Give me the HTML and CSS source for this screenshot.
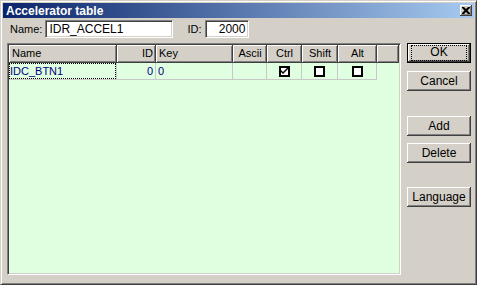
FILE: index.html
```html
<!DOCTYPE html>
<html lang="en">
    <head>
        <title>Accelerator table</title>
        <link rel="stylesheet" href="styles.css">
    </head>
    <body>
        <div class="window">
            <div class="titlebar">
                <span class="title">Accelerator table</span>
                <span class="close-btn">
                    <svg width="8" height="7" viewBox="0 0 8 7"><path d="M0 0h2l2 2 2-2h2v1l-2.5 2.5L8 6v1H6L4 5 2 7H0V6l2.5-2.5L0 1z" fill="#000"/></svg>
                </span>
            </div>

            <div class="form-row">
                <label class="lbl">Name:</label>
                <div class="field field-name">IDR_ACCEL1</div>
                <label class="lbl lbl-id">ID:</label>
                <div class="field field-id">2000</div>
            </div>

            <div class="main">
                <div class="listview">
                    <div class="lv-header">
                        <div class="hcell c-name">Name</div>
                        <div class="hcell c-id right">ID</div>
                        <div class="hcell c-key">Key</div>
                        <div class="hcell c-ascii center">Ascii</div>
                        <div class="hcell c-ctrl center">Ctrl</div>
                        <div class="hcell c-shift center">Shift</div>
                        <div class="hcell c-alt center">Alt</div>
                        <div class="hcell c-rest"></div>
                    </div>
                    <div class="lv-row">
                        <div class="cell c-name"><span class="focus">IDC_BTN1</span></div>
                        <div class="cell c-id right">0</div>
                        <div class="cell c-key">0</div>
                        <div class="cell c-ascii"></div>
                        <div class="cell c-ctrl center"><span class="check checked">
                            <svg width="7" height="7" viewBox="0 0 7 7"><path d="M0 2l2 2 5-5v2l-5 5-2-2z" fill="#000"/></svg>
                        </span></div>
                        <div class="cell c-shift center"><span class="check"></span></div>
                        <div class="cell c-alt center"><span class="check"></span></div>
                    </div>
                </div>

                <div class="buttons">
                    <div class="btn btn-default"><span class="btn-focus">OK</span></div>
                    <div class="btn">Cancel</div>
                    <div class="btn btn-add">Add</div>
                    <div class="btn btn-delete">Delete</div>
                    <div class="btn btn-lang">Language</div>
                </div>
            </div>
        </div>
    </body>
</html>
```

FILE: styles.css
```css
body {
    margin: 0;
    font-family: "Liberation Sans", Arial, sans-serif;
    font-size: 11px;
    color: #000;
}
.window {
    box-sizing: border-box;
    width: 477px;
    height: 285px;
    background: #D4D0C8;
    border: 1px solid;
    border-color: #D4D0C8 #404040 #404040 #D4D0C8;
    box-shadow: inset 1px 1px #fff, inset -1px -1px #808080;
    padding: 2px;
}
.titlebar {
    height: 15px;
    background: linear-gradient(to right, #0A246A, #A6CAF0);
    display: flex;
    align-items: center;
    justify-content: space-between;
    padding: 0 2px 0 3px;
}
.title {
    color: #fff;
    font-weight: bold;
    font-size: 12px;
}
.close-btn {
    width: 12px;
    height: 11px;
    background: #D4D0C8;
    box-shadow: inset -1px -1px #404040, inset 1px 1px #fff, inset -2px -2px #808080;
    display: flex;
    align-items: center;
    justify-content: center;
}
.form-row {
    display: flex;
    align-items: center;
    margin-top: 2px;
    padding-left: 7px;
    height: 18px;
}
.lbl {
    margin-right: 3px;
}
.lbl-id {
    margin-left: 14px;
    margin-right: 4px;
}
.field {
    box-sizing: border-box;
    height: 18px;
    background: #fff;
    border: 1px solid;
    border-color: #808080 #fff #fff #808080;
    box-shadow: inset 1px 1px #404040, inset -1px -1px #D4D0C8;
    padding: 2px 3px 0;
    line-height: 13px;
}
.field-name {
    width: 128px;
    font-size: 12px;
}
.field-id {
    width: 44px;
    text-align: right;
    font-size: 12px;
}
.main {
    display: flex;
    margin-top: 5px;
    padding-left: 4px;
}
.listview {
    box-sizing: border-box;
    width: 394px;
    height: 232px;
    background: #E0FFE0;
    border: 1px solid;
    border-color: #808080 #fff #fff #808080;
    box-shadow: inset 1px 1px #404040, inset -1px -1px #D4D0C8;
    padding: 1px;
}
.lv-header, .lv-row {
    display: flex;
}
.hcell {
    box-sizing: border-box;
    height: 18px;
    line-height: 17px;
    padding: 0 3px;
    background: #D4D0C8;
    box-shadow: inset -1px -1px #404040, inset 1px 1px #fff, inset -2px -2px #808080;
    white-space: nowrap;
}
.cell {
    box-sizing: border-box;
    height: 17px;
    line-height: 16px;
    padding: 0 2px;
    color: #000080;
    border-right: 1px solid #C8C8C8;
    border-bottom: 1px solid #C8C8C8;
}
.c-name { width: 108px; }
.c-id { width: 39px; }
.c-key { width: 77px; }
.c-ascii { width: 34px; }
.c-ctrl { width: 35px; }
.c-shift { width: 36px; }
.c-alt { width: 39px; }
.c-rest { flex: 1; }
.right { text-align: right; }
.center { text-align: center; }
.cell.c-name {
    padding: 0;
}
.focus {
    display: block;
    box-sizing: border-box;
    height: 16px;
    padding-left: 1px;
    outline: 1px dotted #000;
    outline-offset: -1px;
}
.cell.center {
    display: flex;
    align-items: center;
    justify-content: center;
}
.check {
    box-sizing: border-box;
    width: 11px;
    height: 11px;
    border: 2px solid #000;
    background: #fff;
    display: flex;
    align-items: center;
    justify-content: center;
}
.buttons {
    display: flex;
    flex-direction: column;
    margin-left: 6px;
}
.btn {
    box-sizing: border-box;
    width: 64px;
    height: 20px;
    margin-bottom: 6px;
    background: #D4D0C8;
    box-shadow: inset -1px -1px #404040, inset 1px 1px #fff, inset -2px -2px #808080;
    display: flex;
    align-items: center;
    justify-content: center;
    font-size: 12px;
}
.btn-default {
    border: 1px solid #000;
    margin-bottom: 8px;
}
.btn-focus {
    box-sizing: border-box;
    width: 54px;
    height: 14px;
    outline: 1px dotted #000;
    text-align: center;
    line-height: 13px;
}
.btn-add {
    margin-top: 19px;
}
.btn-delete {
    margin-top: 1px;
}
.btn-lang {
    margin-top: 18px;
}
```
